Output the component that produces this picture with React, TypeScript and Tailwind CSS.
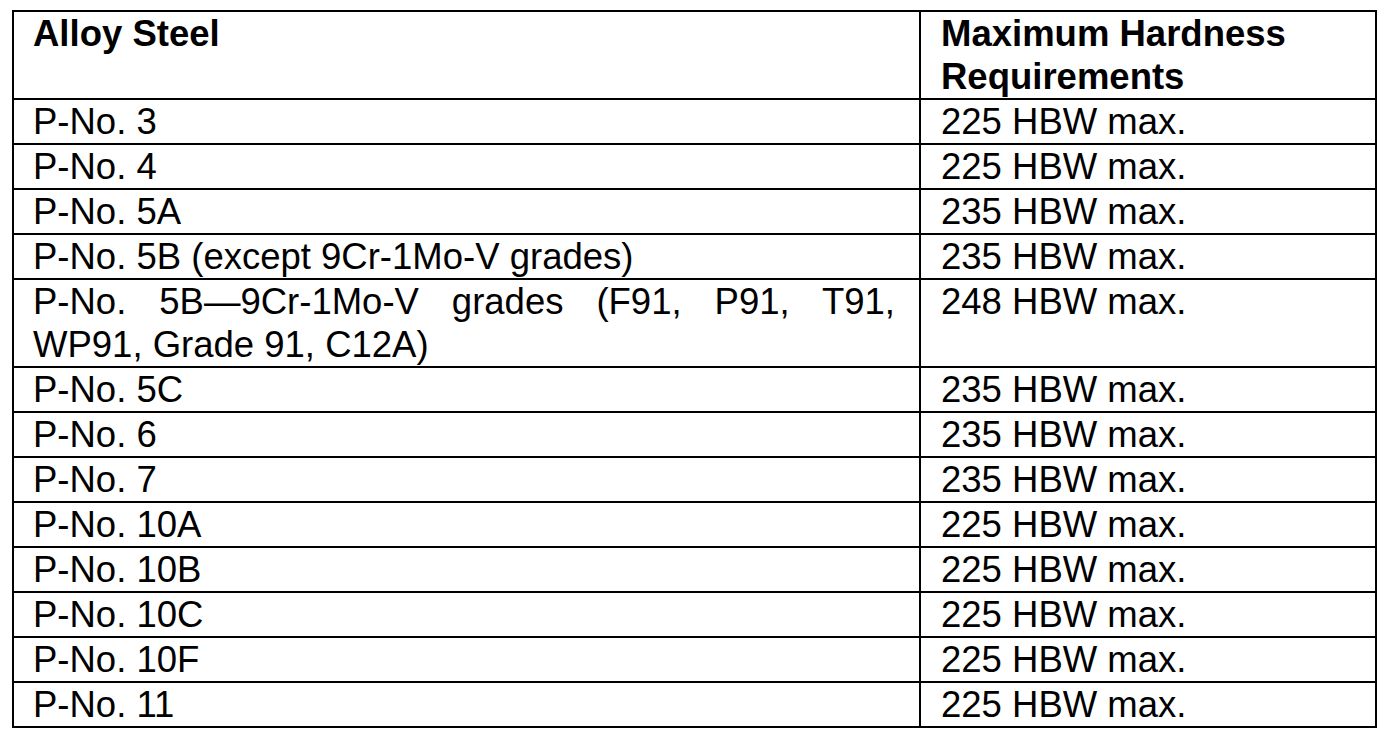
import React from "react";

const rows: { a: string; b: string; tall?: boolean }[] = [
  { a: "P-No. 3", b: "225 HBW max." },
  { a: "P-No. 4", b: "225 HBW max." },
  { a: "P-No. 5A", b: "235 HBW max." },
  { a: "P-No. 5B (except 9Cr-1Mo-V grades)", b: "235 HBW max." },
  {
    a: "P-No. 5B\u20149Cr-1Mo-V grades (F91, P91, T91, WP91, Grade 91, C12A)",
    b: "248 HBW max.",
    tall: true,
  },
  { a: "P-No. 5C", b: "235 HBW max." },
  { a: "P-No. 6", b: "235 HBW max." },
  { a: "P-No. 7", b: "235 HBW max." },
  { a: "P-No. 10A", b: "225 HBW max." },
  { a: "P-No. 10B", b: "225 HBW max." },
  { a: "P-No. 10C", b: "225 HBW max." },
  { a: "P-No. 10F", b: "225 HBW max." },
  { a: "P-No. 11", b: "225 HBW max." },
];

export default function App() {
  return (
    <div className="w-[1398px] h-[732px] bg-white overflow-hidden">
      <div
        className="ml-[12px] mt-[10px] w-[1365px] border-2 border-black text-black text-[36.5px] leading-[43px]"
        style={{ fontFamily: '"Liberation Sans", Arial, sans-serif' }}
      >
        <div className="grid grid-cols-[907px_1fr] font-bold">
          <div className="border-r-2 border-black pl-[19px] pr-[24px] h-[86px]">
            Alloy Steel
          </div>
          <div className="pl-[20px] pr-[10px] h-[86px]">
            Maximum Hardness Requirements
          </div>
        </div>
        {rows.map((r, i) => (
          <div
            key={i}
            className="grid grid-cols-[907px_1fr] border-t-2 border-black"
          >
            <div
              className={
                "border-r-2 border-black pl-[19px] pr-[24px] " +
                (r.tall ? "h-[86px] text-justify" : "h-[43px] whitespace-nowrap")
              }
            >
              {r.a}
            </div>
            <div className="pl-[20px] whitespace-nowrap">{r.b}</div>
          </div>
        ))}
      </div>
    </div>
  );
}
